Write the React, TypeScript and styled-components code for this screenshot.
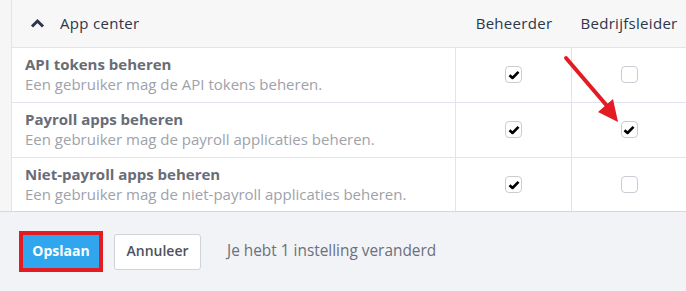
import { FC, Fragment } from 'react'
import styled, { createGlobalStyle } from 'styled-components'

const GlobalStyle = createGlobalStyle`
    html, body {
        margin: 0;
        padding: 0;
        background: #f2f3f7;
        font-family: "Open Sans", "Liberation Sans", Arial, sans-serif;
    }
`

const borderColor = '#dfe4ee'

interface iPermission {
    title: string;
    description: string;
    beheerder: boolean;
    bedrijfsleider: boolean;
}

const permissions: iPermission[] = [
    { title: 'API tokens beheren', description: 'Een gebruiker mag de API tokens beheren.', beheerder: true, bedrijfsleider: false },
    { title: 'Payroll apps beheren', description: 'Een gebruiker mag de payroll applicaties beheren.', beheerder: true, bedrijfsleider: true },
    { title: 'Niet-payroll apps beheren', description: 'Een gebruiker mag de niet-payroll applicaties beheren.', beheerder: true, bedrijfsleider: false },
]

const Page = styled.div`
    position: relative;
    width: 686px;
    height: 291px;
    display: flex;
    flex-direction: column;
    overflow: hidden;
`

const Body = styled.div`
    display: flex;
    height: 211px;
`

const SideStrip = styled.div`
    width: 11px;
    background: #f6f6f7;
    border-right: 1px solid #e3e4e8;
    flex-shrink: 0;
`

const Table = styled.div`
    display: grid;
    grid-template-columns: 444px 116px 114px;
    grid-auto-rows: 55px;
    grid-template-rows: 48px;
    flex-grow: 1;
    background: #fff;
`

const HeaderCell = styled.div<{ $center?: boolean }>`
    background: #f7f7f7;
    border-bottom: 1px solid ${borderColor};
    display: flex;
    align-items: center;
    justify-content: ${props => props.$center ? 'center' : 'flex-start'};
    padding: ${props => props.$center ? '0 0 2px' : '0 0 2px 18px'};
    font-size: 15px;
    font-weight: 500;
    color: #2b364a;
    letter-spacing: 0.3px;
    gap: 15px;
`

const LabelCell = styled.div`
    border-bottom: 1px solid ${borderColor};
    border-right: 1px solid ${borderColor};
    display: flex;
    flex-direction: column;
    justify-content: center;
    padding: 0 0 1px 13px;
`

const Title = styled.div`
    font-size: 15px;
    font-weight: 700;
    color: #686c76;
    line-height: 19px;
`

const Description = styled.div`
    font-size: 15px;
    color: #9ea2aa;
    line-height: 20px;
`

const CheckCell = styled.div<{ $last?: boolean }>`
    border-bottom: 1px solid ${borderColor};
    border-right: ${props => props.$last ? 'none' : `1px solid ${borderColor}`};
    display: flex;
    align-items: center;
    justify-content: center;
    padding-bottom: 1px;
`

const Box = styled.div`
    width: 15px;
    height: 15px;
    border: 1px solid #c9ccd3;
    border-radius: 4px;
    background: #fff;
    display: flex;
    align-items: center;
    justify-content: center;
`

const Footer = styled.div`
    flex-grow: 1;
    border-top: 1px solid #d6d8de;
    background: #f2f3f7;
    display: flex;
    align-items: center;
    padding: 0 0 0 19px;
`

const Highlight = styled.div`
    border: 4px solid #e31b23;
    display: flex;
    margin-right: 11px;
`

const SaveButton = styled.button`
    width: 76px;
    height: 33px;
    border: none;
    background: #2fa6ee;
    color: #fff;
    font-family: inherit;
    font-size: 14px;
    font-weight: 700;
    padding: 0 0 2px;
`

const CancelButton = styled.button`
    width: 87px;
    height: 36px;
    border: 1px solid #cfd2d9;
    border-radius: 3px;
    background: #fff;
    color: #4d525c;
    font-family: inherit;
    font-size: 14px;
    font-weight: 600;
    padding: 0 0 2px;
    margin-right: 26px;
`

const Status = styled.span`
    font-size: 15.4px;
    color: #6b707b;
    padding-bottom: 2px;
`

const Arrow = styled.svg`
    position: absolute;
    left: 560px;
    top: 52px;
`

const Chevron: FC = () => (
    <svg width="15" height="10" viewBox="0 0 15 10">
        <path d="M2 8.5 L7.5 3 L13 8.5" fill="none" stroke="#2b364a" strokeWidth="3" />
    </svg>
)

const Checkbox: FC<{ checked: boolean }> = ({ checked }) => (
    <Box>
        {checked && (
            <svg width="12" height="10" viewBox="0 0 12 10">
                <path d="M1.5 5.2 L4.5 8 L10.5 1.8" fill="none" stroke="#000" strokeWidth="2.6" strokeLinejoin="round" />
            </svg>
        )}
    </Box>
)

const App: FC = () => {
    return (
        <Page>
            <GlobalStyle />
            <Body>
                <SideStrip />
                <Table>
                    <HeaderCell><Chevron />App center</HeaderCell>
                    <HeaderCell $center>Beheerder</HeaderCell>
                    <HeaderCell $center>Bedrijfsleider</HeaderCell>
                    {permissions.map(p => (
                        <Fragment key={p.title}>
                            <LabelCell>
                                <Title>{p.title}</Title>
                                <Description>{p.description}</Description>
                            </LabelCell>
                            <CheckCell><Checkbox checked={p.beheerder} /></CheckCell>
                            <CheckCell $last><Checkbox checked={p.bedrijfsleider} /></CheckCell>
                        </Fragment>
                    ))}
                </Table>
            </Body>
            <Footer>
                <Highlight>
                    <SaveButton>Opslaan</SaveButton>
                </Highlight>
                <CancelButton>Annuleer</CancelButton>
                <Status>Je hebt 1 instelling veranderd</Status>
            </Footer>
            <Arrow width="70" height="76" viewBox="0 0 70 76">
                <line x1="6" y1="6" x2="48" y2="55" stroke="#e31b23" strokeWidth="4" strokeLinecap="round" />
                <polygon points="58,70 38,60 53,47" fill="#e31b23" />
            </Arrow>
        </Page>
    )
}

export default App
